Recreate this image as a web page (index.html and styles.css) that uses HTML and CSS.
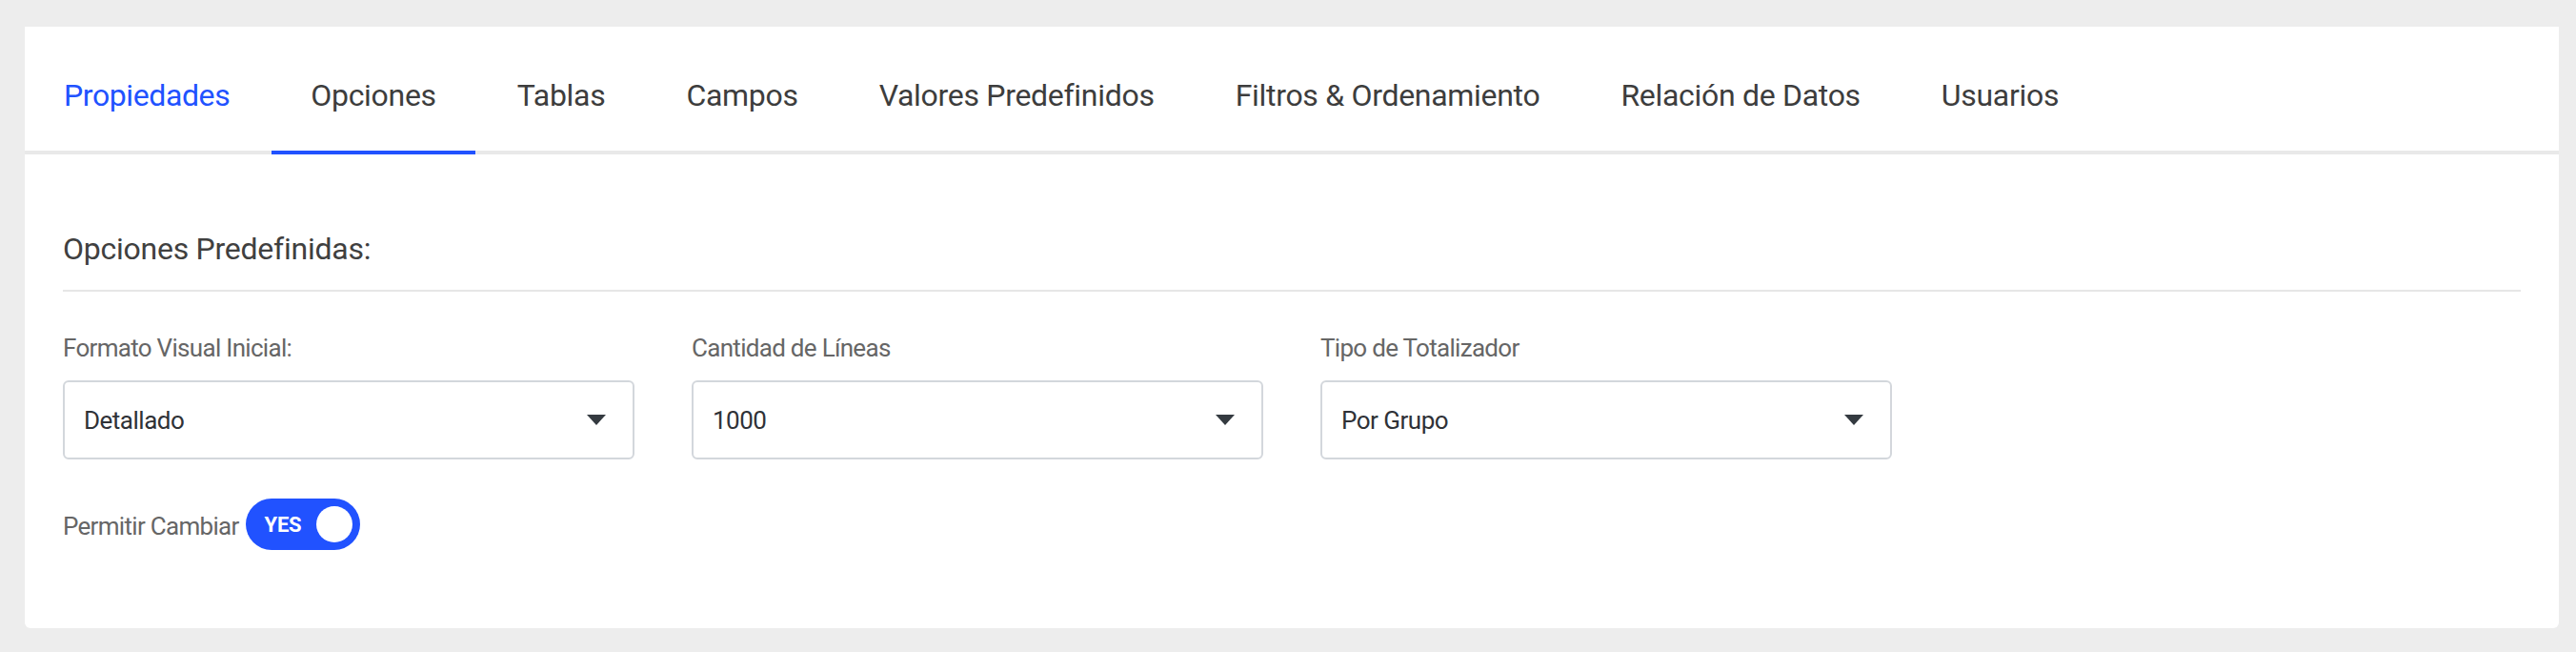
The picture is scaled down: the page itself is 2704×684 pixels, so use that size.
FILE: index.html
```html
<!DOCTYPE html>
<html lang="es">
<head>
<meta charset="utf-8">
<title>Opciones</title>
<link rel="stylesheet" href="styles.css">
</head>
<body>
<div class="card">
  <nav class="tabs">
    <a class="tab tab-hover">Propiedades</a>
    <a class="tab tab-active">Opciones</a>
    <a class="tab">Tablas</a>
    <a class="tab">Campos</a>
    <a class="tab">Valores Predefinidos</a>
    <a class="tab">Filtros &amp; Ordenamiento</a>
    <a class="tab">Relación de Datos</a>
    <a class="tab">Usuarios</a>
  </nav>
  <div class="content">
    <h2 class="section-title">Opciones Predefinidas:</h2>
    <div class="fields">
      <div class="field">
        <label class="field-label">Formato Visual Inicial:</label>
        <div class="select"><span>Detallado</span><i class="caret"></i></div>
      </div>
      <div class="field">
        <label class="field-label">Cantidad de Líneas</label>
        <div class="select"><span>1000</span><i class="caret"></i></div>
      </div>
      <div class="field">
        <label class="field-label">Tipo de Totalizador</label>
        <div class="select"><span>Por Grupo</span><i class="caret"></i></div>
      </div>
    </div>
    <div class="switch-row">
      <span class="switch-label">Permitir Cambiar</span>
      <span class="switch"><span class="switch-text">YES</span><span class="knob"></span></span>
    </div>
  </div>
</div>
</body>
</html>
```

FILE: styles.css
```css
html, body {
  margin: 0;
  padding: 0;
}
body {
  background: #ededed;
  font-family: Roboto, "Liberation Sans", Arial, sans-serif;
  height: 684px;
  overflow: hidden;
}
.card {
  margin: 28px 18px 0 26px;
  background: #fff;
  height: 631px;
  border-radius: 0 0 6px 6px;
}
.tabs {
  display: flex;
  height: 130px;
  border-bottom: 4px solid #e9e9e9;
  gap: 3px;
}
.tab {
  display: block;
  padding: 52px 41px 0;
  height: 78px;
  font-size: 32px;
  line-height: 40px;
  letter-spacing: -0.3px;
  color: #3d3d3d;
  white-space: nowrap;
  cursor: pointer;
}
.tab-hover {
  color: #2152ff;
  letter-spacing: -0.4px;
}
.tab-active {
  border-bottom: 4px solid #2152ff;
}
.content {
  padding: 0 40px;
}
.section-title {
  margin: 79px 0 0;
  padding-bottom: 23px;
  border-bottom: 2px solid #e6e6e6;
  font-size: 32px;
  line-height: 40px;
  font-weight: 400;
  letter-spacing: -0.25px;
  color: #404040;
}
.fields {
  display: grid;
  grid-template-columns: repeat(3, 600px);
  column-gap: 60px;
  margin-top: 43px;
}
.field-label {
  display: block;
  font-size: 26px;
  line-height: 32px;
  letter-spacing: -0.7px;
  color: #666;
}
.select {
  margin-top: 18px;
  height: 79px;
  border: 2px solid #d3d7dc;
  border-radius: 6px;
  display: flex;
  align-items: center;
  justify-content: space-between;
  padding: 0 28px 0 20px;
  font-size: 26px;
  letter-spacing: -0.5px;
  color: #2f3237;
}
.caret {
  width: 0;
  height: 0;
  border-left: 10px solid transparent;
  border-right: 10px solid transparent;
  border-top: 11px solid #343a40;
}
.switch-row {
  display: flex;
  align-items: center;
  gap: 7px;
  margin-top: 41px;
}
.switch-label {
  font-size: 26px;
  letter-spacing: -0.7px;
  color: #666;
  padding-top: 4px;
}
.switch {
  width: 120px;
  height: 54px;
  box-sizing: border-box;
  border-radius: 27px;
  background: #2152ff;
  display: flex;
  align-items: center;
  justify-content: space-between;
  padding: 0 8px 0 20px;
}
.switch-text {
  color: #fff;
  font-weight: 700;
  font-size: 22px;
  letter-spacing: -0.3px;
}
.knob {
  width: 38px;
  height: 38px;
  border-radius: 50%;
  background: #fff;
}
```
